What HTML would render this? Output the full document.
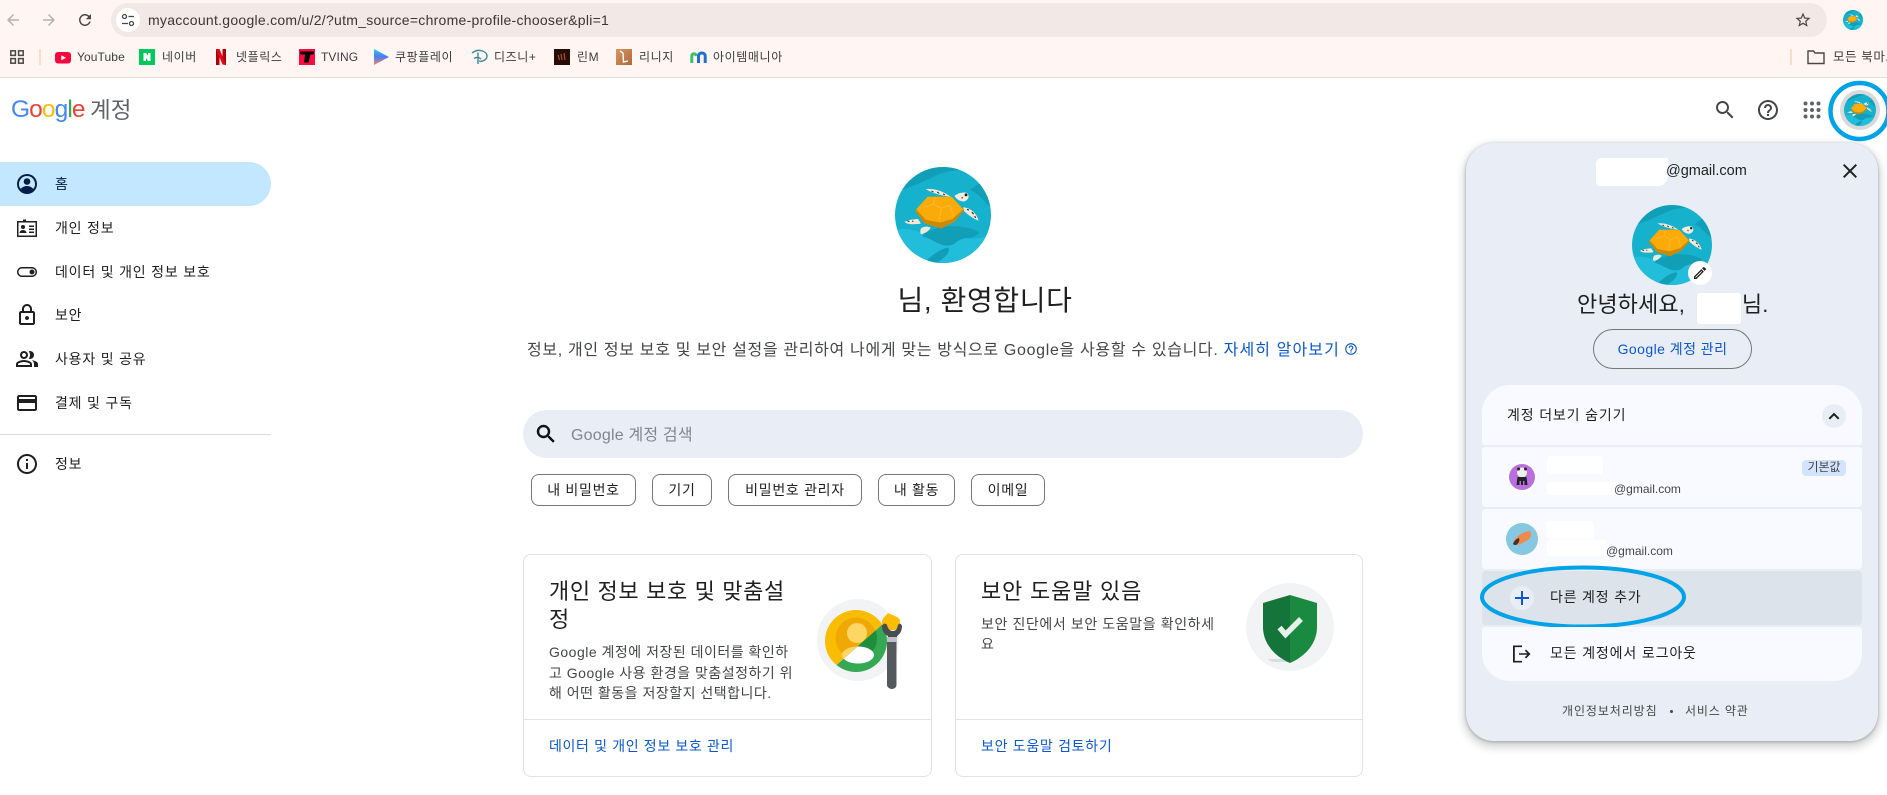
<!DOCTYPE html>
<html lang="ko"><head><meta charset="utf-8"><title>Google 계정</title>
<style>
html,body{margin:0;padding:0;background:#fff}
body{width:1887px;height:795px;position:relative;overflow:hidden;font-family:"Liberation Sans","Noto Sans CJK KR",sans-serif;color:#1f1f1f}
.a{position:absolute}
.t{position:absolute;white-space:nowrap}
.bm{font-size:12px;line-height:16px;top:49px;color:#3c3c3c;letter-spacing:.6px}
.nav{font-size:14px;line-height:20px;left:55px;color:#1f1f1f;letter-spacing:.8px}
.chip{position:absolute;top:474px;height:30px;border:1px solid #747775;border-radius:8px;background:#fff;font-size:14px;line-height:30px;text-align:center;color:#1f1f1f;letter-spacing:.7px}
.card{position:absolute;top:554px;height:221px;border:1px solid #e1e3e6;border-radius:8px;background:#fff}
.sec{position:absolute;left:1482px;width:380px;background:#f8faff;border-radius:4px}
svg{position:absolute;display:block}
</style></head><body>
<svg width="0" height="0" style="position:absolute"><defs>
<clipPath id="cc"><circle cx="50" cy="50" r="50"/></clipPath>
<clipPath id="cy"><path d="M0 0H110V5.600L0 103z"/></clipPath>
<clipPath id="cg"><path d="M110 5.600V110H0V103z"/></clipPath>
<symbol id="turtle" viewBox="0 0 100 100">
<g clip-path="url(#cc)">
<rect width="100" height="100" fill="#15b1cd"/>
<path d="M0 26C15 22 30 15 45 8 60 2 72 4 84 0H0z" fill="#119fb8"/>
<path d="M100 42C92 36 88 28 78 24L92 14 100 25z" fill="#119fb8"/>
<path d="M0 66C20 60 32 75 48 70 62 66 72 82 100 70V100H0z" fill="#21bddb"/>
<path d="M28 72C40 60 70 58 88 68 80 78 72 70 62 80 50 86 42 76 28 72z" fill="#119fb8"/>
<path d="M30 100C40 90 50 84 56 84 58 90 48 98 42 100z" fill="#119fb8"/>
<path d="M70 100C78 92 88 86 100 84V100z" fill="#119fb8"/>
</g>
<path d="M32 23C40 22 50 25 58 31 50 30 40 28 32 23z" fill="#efe9dc"/>
<path d="M38 25l2 1M44 26l2 1.500M50 28l2 1" stroke="#4a3a30" stroke-width="1.200"/>
<path d="M62 30C66 27 71 26 75 27 78 30 77 34 72 36 68 36 64 34 62 30z" fill="#f1ece0"/>
<circle cx="74" cy="29" r="1.500" fill="#222"/><circle cx="70" cy="32" r=".9" fill="#6b5a4a"/>
<path d="M71 42C77 42 85 47 87 56 82 54 76 50 72 46z" fill="#efe9dc"/>
<path d="M75 44l2 1M80 47l2 2M83 51l1 2" stroke="#3a2e28" stroke-width="1.200"/>
<path d="M24 54 16 55 10 57C12 60 20 60 27 59z" fill="#efe9dc"/>
<path d="M13 56l2 1M18 56l1 1" stroke="#3a2e28" stroke-width="1.100"/>
<path d="M33 62 28 63C26 65 26 68 27 70 32 69 36 66 37 63z" fill="#efe9dc"/>
<path d="M21 46 34 31 59 31 72 45 62 57 48 64 31 59z" fill="#c98a07"/>
<path d="M22 44 34 31 59 31 71 44 60 54 47 58 32 55z" fill="#fbab07"/>
<path d="M30 42l10-3 8 4 9-3M40 39l2-7M48 43l-2 12M57 40l4 12" stroke="#f7bf3f" stroke-width=".8" fill="none"/>
</symbol>
</defs></svg>

<!-- chrome -->
<div class="a" style="left:0;top:0;width:1887px;height:77px;background:#fff6f3;border-bottom:1px solid #f0ded8"></div>
<div class="a" style="left:111px;top:3px;width:1716px;height:34px;background:#f2e8e5;border-radius:17px"></div>
<svg style="left:4px;top:11px" width="18" height="18" viewBox="0 0 24 24"><path d="M20 11H7.800l5.600-5.600L12 4l-8 8 8 8 1.400-1.400L7.800 13H20z" fill="#b8b1ae"/></svg>
<svg style="left:40px;top:11px" width="18" height="18" viewBox="0 0 24 24"><path d="M4 11h12.200l-5.600-5.600L12 4l8 8-8 8-1.400-1.400 5.600-5.600H4z" fill="#b8b1ae"/></svg>
<svg style="left:76px;top:11px" width="18" height="18" viewBox="0 0 24 24"><path d="M17.650 6.350A7.960 7.960 0 0 0 12 4a8 8 0 1 0 7.730 10h-2.080A6 6 0 1 1 12 6c1.660 0 3.140.69 4.220 1.780L13 11h7V4z" fill="#4c4644"/></svg>
<div class="a" style="left:116px;top:8px;width:24px;height:24px;background:#fff;border-radius:50%"></div>
<svg style="left:120px;top:12px" width="16" height="16" viewBox="0 0 16 16" fill="none" stroke="#4c4644" stroke-width="1.300"><circle cx="4.500" cy="4.500" r="2"/><path d="M8.500 4.500H14M2 11.500h6"/><circle cx="11.500" cy="11.500" r="2"/></svg>
<div class="t" style="left:148px;top:10px;font-size:14px;line-height:20px;color:#3c3634;letter-spacing:.27px">myaccount.google.com/u/2/?utm_source=chrome-profile-chooser&amp;pli=1</div>
<svg style="left:1794px;top:11px" width="18" height="18" viewBox="0 0 24 24"><path d="M22 9.240l-7.190-.62L12 2 9.190 8.630 2 9.240l5.460 4.730L5.820 21 12 17.270 18.180 21l-1.630-7.030L22 9.240zM12 15.400l-3.760 2.270 1-4.280-3.320-2.880 4.380-.38L12 6.100l1.710 4.040 4.380.38-3.320 2.880 1 4.280L12 15.400z" fill="#4c4644"/></svg>
<svg style="left:1843px;top:10px" width="20" height="20"><use href="#turtle"/></svg>

<!-- bookmarks -->
<svg style="left:10px;top:50px" width="14" height="14" viewBox="0 0 14 14" fill="none" stroke="#4c4644" stroke-width="1.500"><rect x=".8" y=".8" width="4.600" height="4.600"/><rect x="8.600" y=".8" width="4.600" height="4.600"/><rect x=".8" y="8.600" width="4.600" height="4.600"/><rect x="8.600" y="8.600" width="4.600" height="4.600"/></svg>
<div class="a" style="left:39px;top:49px;width:2px;height:16px;background:#fbdcca"></div>
<svg style="left:55px;top:52px" width="16" height="12" viewBox="0 0 16 12"><rect width="16" height="11.500" rx="3" fill="#f8073f"/><path d="M6.300 3.200 11 5.800 6.300 8.400z" fill="#fff"/></svg>
<div class="t bm" style="left:77px;letter-spacing:.1px">YouTube</div>
<svg style="left:139px;top:49px" width="16" height="16" viewBox="0 0 16 16"><rect width="16" height="16" fill="#03c75a"/><path d="M4.500 4h2.600l2 3V4h2.400v8H9l-2-3v3H4.500z" fill="#fff"/></svg>
<div class="t bm" style="left:162px">네이버</div>
<svg style="left:216px;top:49px" width="10" height="16" viewBox="0 0 10 16"><path d="M0 0h3.500v16L0 16z" fill="#a8050d"/><path d="M6.500 0H10v16l-3.500-.6z" fill="#a8050d"/><path d="M0 0h3.500l6.500 16-3.500-.5z" fill="#e50914"/></svg>
<div class="t bm" style="left:236px">넷플릭스</div>
<svg style="left:299px;top:49px" width="16" height="16" viewBox="0 0 16 16"><rect width="16" height="16" fill="#fe0b41"/><path d="M1 2.500h14l-.5 3h-3L9.500 13.500H5L6 5.500H1.500z" fill="#0a0507"/></svg>
<div class="t bm" style="left:321px;letter-spacing:.1px">TVING</div>
<svg style="left:373px;top:48px" width="16" height="18" viewBox="0 0 16 18"><defs><linearGradient id="pl" x1="0" y1="0" x2="0" y2="1"><stop offset="0" stop-color="#28c6f0"/><stop offset=".5" stop-color="#4b7cf3"/><stop offset="1" stop-color="#f58a5a"/></linearGradient></defs><path d="M1 1 16 9 1 17z" fill="url(#pl)"/></svg>
<div class="t bm" style="left:395px">쿠팡플레이</div>
<svg style="left:471px;top:49px" width="17" height="16" viewBox="0 0 17 16" fill="none" stroke="#3a8a96" stroke-width="1.400"><path d="M1 4C7-1 16 2 16 7c0 4-5 6-8 5"/><path d="M7 3.500V15"/><path d="M3 9.500c2-1.500 5-1.500 7 .5"/></svg>
<div class="t bm" style="left:494px">디즈니+</div>
<svg style="left:554px;top:49px" width="16" height="16" viewBox="0 0 16 16"><rect width="16" height="16" fill="#260d05"/><path d="M4 6 5.500 11M7 5l1 6M10 4l1 7" stroke="#b3502c" stroke-width="1.200"/></svg>
<div class="t bm" style="left:577px">린M</div>
<svg style="left:616px;top:49px" width="16" height="16" viewBox="0 0 16 16"><defs><linearGradient id="rd" x1="0" y1="0" x2="1" y2="1"><stop offset="0" stop-color="#d9955f"/><stop offset="1" stop-color="#a96a3d"/></linearGradient></defs><rect width="16" height="16" fill="url(#rd)"/><path d="M4 2 7 4 7.500 13 12 12" fill="none" stroke="#fff" stroke-width="1.400"/></svg>
<div class="t bm" style="left:639px">리니지</div>
<svg style="left:690px;top:50px" width="17" height="14" viewBox="0 0 17 14" fill="none" stroke-width="3"><path d="M1.800 13V6c0-3 4-3 4.500 0" stroke="#3fbf6b"/><path d="M8.500 13V6c0-4 6.700-4 6.700 0v7" stroke="#1f6fd0"/></svg>
<div class="t bm" style="left:713px">아이템매니아</div>
<div class="a" style="left:1790px;top:49px;width:2px;height:16px;background:#fbdcca"></div>
<svg style="left:1807px;top:49px" width="18" height="16" viewBox="0 0 18 16" fill="none" stroke="#4c4644" stroke-width="1.400"><path d="M1 2h5.500l1.500 2h9v10.500H1z"/></svg>
<div class="t bm" style="left:1833px;font-size:12.500px">모든 북마크</div>

<!-- page header -->
<div class="t" style="left:11px;top:94px;font-size:24.500px;line-height:32px;letter-spacing:-.9px"><span style="color:#4285f4">G</span><span style="color:#ea4335">o</span><span style="color:#fbbc05">o</span><span style="color:#4285f4">g</span><span style="color:#34a853">l</span><span style="color:#ea4335">e</span></div>
<div class="t" style="left:90px;top:95px;font-size:22.500px;line-height:32px;color:#5f6368">계정</div>
<svg style="left:1713px;top:98px" width="24" height="24" viewBox="0 0 24 24"><path d="M15.500 14h-.79l-.28-.27C15.410 12.590 16 11.110 16 9.500 16 5.910 13.090 3 9.500 3S3 5.910 3 9.500 5.910 16 9.500 16c1.610 0 3.090-.59 4.230-1.570l.27.28v.79l5 4.990L20.490 19l-4.990-5zm-6 0C7.010 14 5 11.990 5 9.500S7.010 5 9.500 5 14 7.010 14 9.500 11.990 14 9.500 14z" fill="#444746"/></svg>
<svg style="left:1756px;top:98px" width="24" height="24" viewBox="0 0 24 24"><path d="M11 18h2v-2h-2v2zm1-16C6.480 2 2 6.480 2 12s4.480 10 10 10 10-4.480 10-10S17.520 2 12 2zm0 18c-4.410 0-8-3.590-8-8s3.590-8 8-8 8 3.590 8 8-3.590 8-8 8zm0-14c-2.210 0-4 1.790-4 4h2c0-1.100.9-2 2-2s2 .9 2 2c0 2-3 1.750-3 5h2c0-2.250 3-2.500 3-5 0-2.210-1.790-4-4-4z" fill="#444746"/></svg>
<svg style="left:1800px;top:98px" width="24" height="24" viewBox="0 0 24 24" fill="#5f6368"><circle cx="5.500" cy="5.500" r="2"/><circle cx="12" cy="5.500" r="2"/><circle cx="18.500" cy="5.500" r="2"/><circle cx="5.500" cy="12" r="2"/><circle cx="12" cy="12" r="2"/><circle cx="18.500" cy="12" r="2"/><circle cx="5.500" cy="18.500" r="2"/><circle cx="12" cy="18.500" r="2"/><circle cx="18.500" cy="18.500" r="2"/></svg>
<div class="a" style="left:1840px;top:90px;width:40px;height:40px;background:#d9d9d9;border-radius:50%"></div>
<svg style="left:1844px;top:94px" width="32" height="32"><use href="#turtle"/></svg>
<svg style="left:1825px;top:78px" width="62" height="66"><ellipse cx="34.500" cy="33" rx="29" ry="28" fill="none" stroke="#00a2e8" stroke-width="4.500"/></svg>

<!-- sidebar -->
<div class="a" style="left:0;top:162px;width:271px;height:44px;background:#c2e7ff;border-radius:0 22px 22px 0"></div>
<svg style="left:15px;top:172px" width="24" height="24" viewBox="0 0 24 24"><path d="M12 2a10 10 0 1 0 0 20 10 10 0 0 0 0-20zm0 2a8 8 0 0 1 6.300 12.900C16.600 15 14.400 14 12 14s-4.600 1-6.300 2.900A8 8 0 0 1 12 4z" fill="#041e49"/><circle cx="12" cy="9.500" r="3.300" fill="#041e49"/></svg>
<div class="t nav" style="top:174px;color:#041e49">홈</div>
<svg style="left:15px;top:216px" width="24" height="24" viewBox="0 0 24 24" fill="#1f1f1f"><path d="M2 5h6V3.500h3V5h11v16H2V5zm1.500 1.500v13h17v-13z"/><circle cx="8" cy="11" r="2"/><path d="M4.500 17c0-2 2-3 3.500-3s3.500 1 3.500 3z"/><path d="M14 9.500h5V11h-5zM14 12.500h5V14h-5zM14 15.500h5V17h-5z"/></svg>
<div class="t nav" style="top:218px">개인 정보</div>
<svg style="left:15px;top:260px" width="24" height="24" viewBox="0 0 24 24"><path d="M17 7H7c-2.760 0-5 2.240-5 5s2.240 5 5 5h10c2.760 0 5-2.240 5-5s-2.240-5-5-5zm0 8.500H7c-1.930 0-3.500-1.570-3.500-3.500S5.070 8.500 7 8.500h10c1.930 0 3.500 1.570 3.500 3.500s-1.570 3.500-3.500 3.500zm0-6a2.500 2.500 0 1 0 0 5 2.500 2.500 0 0 0 0-5z" fill="#1f1f1f"/></svg>
<div class="t nav" style="top:262px">데이터 및 개인 정보 보호</div>
<svg style="left:15px;top:303px" width="24" height="24" viewBox="0 0 24 24"><path d="M18 8h-1V6c0-2.760-2.240-5-5-5S7 3.240 7 6v2H6c-1.100 0-2 .9-2 2v10c0 1.100.9 2 2 2h12c1.100 0 2-.9 2-2V10c0-1.100-.9-2-2-2zM9 6c0-1.660 1.340-3 3-3s3 1.340 3 3v2H9V6zm9 14H6V10h12v10zm-6-3c1.100 0 2-.9 2-2s-.9-2-2-2-2 .9-2 2 .9 2 2 2z" fill="#1f1f1f"/></svg>
<div class="t nav" style="top:305px">보안</div>
<svg style="left:15px;top:347px" width="24" height="24" viewBox="0 0 24 24"><path d="M16.670 13.130C18.040 14.060 19 15.320 19 17v3h4v-3c0-2.180-3.570-3.470-6.330-3.870zM15 12c2.210 0 4-1.790 4-4s-1.790-4-4-4c-.47 0-.91.1-1.330.24C14.500 5.270 15 6.580 15 8s-.5 2.730-1.330 3.760c.42.14.86.24 1.330.24zM9 12c2.210 0 4-1.790 4-4s-1.790-4-4-4-4 1.790-4 4 1.790 4 4 4zm0-6c1.100 0 2 .9 2 2s-.9 2-2 2-2-.9-2-2 .9-2 2-2zM9 13c-2.670 0-8 1.340-8 4v3h16v-3c0-2.660-5.330-4-8-4zm6 5H3v-.99C3.200 16.290 6.300 15 9 15s5.800 1.290 6 2z" fill="#1f1f1f"/></svg>
<div class="t nav" style="top:349px">사용자 및 공유</div>
<svg style="left:15px;top:391px" width="24" height="24" viewBox="0 0 24 24"><path d="M20 4H4c-1.110 0-1.990.89-1.990 2L2 18c0 1.110.89 2 2 2h16c1.110 0 2-.89 2-2V6c0-1.110-.89-2-2-2zm0 14H4v-6h16v6zm0-10H4V6h16v2z" fill="#1f1f1f"/></svg>
<div class="t nav" style="top:393px">결제 및 구독</div>
<div class="a" style="left:0;top:434px;width:271px;height:1px;background:#dadce0"></div>
<svg style="left:15px;top:452px" width="24" height="24" viewBox="0 0 24 24"><path d="M11 7h2v2h-2zm0 4h2v6h-2zm1-9C6.480 2 2 6.480 2 12s4.480 10 10 10 10-4.480 10-10S17.520 2 12 2zm0 18c-4.410 0-8-3.590-8-8s3.590-8 8-8 8 3.590 8 8-3.590 8-8 8z" fill="#1f1f1f"/></svg>
<div class="t nav" style="top:454px">정보</div>

<!-- main -->
<svg style="left:895px;top:167px" width="96" height="96"><use href="#turtle"/></svg>
<div class="t" style="left:881px;top:279px;width:208px;text-align:center;font-size:28px;line-height:44px;color:#1f1f1f;letter-spacing:.6px">님, 환영합니다</div>
<div class="t" style="left:527px;top:339px;font-size:16px;line-height:24px;color:#444746;letter-spacing:.67px">정보, 개인 정보 보호 및 보안 설정을 관리하여 나에게 맞는 방식으로 Google을 사용할 수 있습니다. <span style="color:#0b57d0;letter-spacing:1.1px">자세히 알아보기</span></div>
<svg style="left:1344px;top:342px" width="14" height="14" viewBox="0 0 24 24"><path d="M11 18h2v-2h-2v2zm1-16C6.480 2 2 6.480 2 12s4.480 10 10 10 10-4.480 10-10S17.520 2 12 2zm0 18c-4.410 0-8-3.590-8-8s3.590-8 8-8 8 3.590 8 8-3.590 8-8 8zm0-14c-2.210 0-4 1.790-4 4h2c0-1.100.9-2 2-2s2 .9 2 2c0 2-3 1.750-3 5h2c0-2.250 3-2.500 3-5 0-2.210-1.790-4-4-4z" fill="#0b57d0"/></svg>

<div class="a" style="left:523px;top:410px;width:840px;height:48px;background:#e9eef6;border-radius:24px"></div>
<svg style="left:534px;top:422px" width="24" height="24" viewBox="0 0 24 24"><path d="M15.500 14h-.79l-.28-.27C15.410 12.590 16 11.110 16 9.500 16 5.910 13.090 3 9.500 3S3 5.910 3 9.500 5.910 16 9.500 16c1.610 0 3.090-.59 4.230-1.570l.27.28v.79l5 4.990L20.490 19l-4.990-5zm-6 0C7.010 14 5 11.990 5 9.500S7.010 5 9.500 5 14 7.010 14 9.500 11.990 14 9.500 14z" fill="#111" stroke="#111" stroke-width=".5"/></svg>
<div class="t" style="left:571px;top:424px;font-size:16px;line-height:24px;color:#80868b;letter-spacing:.2px">Google 계정 검색</div>

<div class="chip" style="left:531px;width:103px">내 비밀번호</div>
<div class="chip" style="left:652px;width:58px">기기</div>
<div class="chip" style="left:728px;width:132px">비밀번호 관리자</div>
<div class="chip" style="left:878px;width:75px">내 활동</div>
<div class="chip" style="left:971px;width:72px">이메일</div>

<!-- cards -->
<div class="card" style="left:523px;width:407px"></div>
<div class="a" style="left:524px;top:719px;width:407px;height:1px;background:#e1e3e6"></div>
<div class="t" style="left:549px;top:578px;width:255px;white-space:normal;font-size:22px;line-height:28px;letter-spacing:.65px">개인 정보 보호 및 맞춤설<br>정</div>
<div class="t" style="left:549px;top:642px;font-size:14px;line-height:20.500px;color:#444746;letter-spacing:.5px">Google 계정에 저장된 데이터를 확인하<br>고 Google 사용 환경을 맞춤설정하기 위<br>해 어떤 활동을 저장할지 선택합니다.</div>
<div class="t" style="left:549px;top:736px;font-size:14px;line-height:20px;color:#0b57d0;letter-spacing:.65px">데이터 및 개인 정보 보호 관리</div>
<svg style="left:805px;top:590px" width="110" height="105" viewBox="0 0 110 105">
<circle cx="53" cy="50" r="41" fill="#f1f3f4"/>
<g clip-path="url(#cy)"><circle cx="51" cy="51" r="31" fill="#fbbc04"/><circle cx="51" cy="48" r="20.500" fill="#f0a804"/><circle cx="52" cy="43" r="10" fill="#fdd663"/><ellipse cx="53" cy="65" rx="16" ry="8.500" fill="#fdd663"/></g>
<g clip-path="url(#cg)"><circle cx="51" cy="51" r="31" fill="#34a853"/><path d="M31 48a20.500 20.500 0 0 1 41 0c0 9-5 16-12 19H42c-7-3-11-10-11-19z" fill="#1e8e3e"/><circle cx="52" cy="43" r="10" fill="#fff"/><ellipse cx="53" cy="65" rx="16" ry="8.500" fill="#fff"/></g>
<path d="M83 23c-2 3-6 5-6 9 0 4 3 7 7 8h6c3-2 5-5 5-9 0-4-6-5-12-8z" fill="#fbbc04"/>
<path d="M77 36c0 5 2 8 6 10v5h9v-5c3-2 5-5 5-10-1-3-3-3-4-1-1 4-2 6-5 6s-5-2-6-6c-1-2-4-2-5 1z" fill="#494c50"/>
<rect x="82" y="47" width="10" height="5" fill="#bdc1c6"/>
<path d="M82 52h9.500v43c0 2-2 4-4.500 4s-5-2-5-4z" fill="#55585d"/>
</svg>

<div class="card" style="left:955px;width:406px"></div>
<div class="a" style="left:956px;top:719px;width:406px;height:1px;background:#e1e3e6"></div>
<div class="t" style="left:981px;top:578px;font-size:22px;line-height:28px;letter-spacing:.8px">보안 도움말 있음</div>
<div class="t" style="left:981px;top:614px;font-size:14px;line-height:20px;color:#444746;letter-spacing:.6px">보안 진단에서 보안 도움말을 확인하세<br>요</div>
<div class="t" style="left:981px;top:736px;font-size:14px;line-height:20px;color:#0b57d0;letter-spacing:.7px">보안 도움말 검토하기</div>
<svg style="left:1240px;top:575px" width="105" height="105" viewBox="0 0 105 105">
<circle cx="50" cy="52" r="44" fill="#f1f3f4"/>
<path d="M28 84h22v3H36c-4 0-7-1-8-3z" fill="#dadce0"/>
<path d="M50 20 23 28V52c0 16 11 29 27 36z" fill="#15743a"/>
<path d="M50 20 77 28V52c0 16-11 29-27 36z" fill="#1a8a40"/>
<polyline points="39.500,52.500 45.500,59.500 61,44" fill="none" stroke="#e8f0ea" stroke-width="5.500"/>
</svg>

<!-- account panel -->
<div class="a" style="left:1466px;top:143px;width:412px;height:598px;background:#e9eef6;border-radius:28px;box-shadow:0 4px 8px 3px rgba(60,64,67,.2),0 1px 3px rgba(60,64,67,.35)"></div>
<div class="a" style="left:1596px;top:158px;width:72px;height:28px;background:#fff;border-radius:6px 2px 10px 4px"></div>
<div class="t" style="left:1666px;top:161px;font-size:14.500px;line-height:20px;color:#1f1f1f">@gmail.com</div>
<svg style="left:1838px;top:159px" width="24" height="24" viewBox="0 0 24 24"><path d="M19 6.410 17.590 5 12 10.590 6.410 5 5 6.410 10.590 12 5 17.590 6.410 19 12 13.410 17.590 19 19 17.590 13.410 12z" fill="#1f1f1f"/></svg>
<svg style="left:1632px;top:205px" width="80" height="80"><use href="#turtle"/></svg>
<div class="a" style="left:1688px;top:261px;width:24px;height:24px;background:#fff;border-radius:50%"></div>
<svg style="left:1692px;top:265px" width="16" height="16" viewBox="0 0 24 24"><path d="M3 17.250V21h3.750L17.810 9.940l-3.750-3.750zM5.920 19H5v-.92l9.060-9.060.92.92zM20.710 7.040a1 1 0 0 0 0-1.410l-2.340-2.340a1 1 0 0 0-1.410 0l-1.830 1.830 3.750 3.750z" fill="#1f1f1f"/></svg>
<div class="t" style="left:1577px;top:288px;font-size:22px;line-height:34px;color:#1f1f1f;letter-spacing:.1px">안녕하세요,<span style="display:inline-block;width:57px"></span>님.</div>
<div class="a" style="left:1697px;top:293px;width:44px;height:31px;background:#fff;border-radius:3px"></div>
<div class="a" style="left:1593px;top:329px;width:157px;height:38px;border:1px solid #747775;border-radius:20px;font-size:14px;line-height:38px;text-align:center;color:#0b57d0;letter-spacing:.45px">Google 계정 관리</div>

<div class="sec" style="top:385px;height:60px;border-radius:28px 28px 4px 4px"></div>
<div class="t" style="left:1507px;top:405px;font-size:14px;line-height:20px;color:#1f1f1f;letter-spacing:.85px">계정 더보기 숨기기</div>
<div class="a" style="left:1822px;top:404px;width:24px;height:24px;background:#e9eef6;border-radius:50%"></div>
<svg style="left:1824px;top:406px" width="20" height="20" viewBox="0 0 24 24"><path d="M12 8l-6.500 6.500 1.700 1.700L12 11.400l4.800 4.800 1.700-1.700z" fill="#1f1f1f"/></svg>

<div class="sec" style="top:447px;height:60px"></div>
<div class="a" style="left:1507px;top:462px;width:30px;height:30px;background:#fff;border-radius:50%"></div>
<svg style="left:1509px;top:464px" width="26" height="26" viewBox="0 0 26 26"><circle cx="13" cy="13" r="13" fill="#b96fdd"/><circle cx="13" cy="8.500" r="5" fill="#eee"/><circle cx="9.500" cy="5" r="1.500" fill="#222"/><circle cx="16.500" cy="5" r="1.500" fill="#222"/><path d="M8.500 13h9l1 8h-3v-4h-1.500v4h-2V17H10.500v4h-3z" fill="#222"/></svg>
<div class="a" style="left:1547px;top:456px;width:56px;height:18px;background:#fff;border-radius:4px"></div>
<div class="a" style="left:1547px;top:482px;width:68px;height:13px;background:#fff;border-radius:3px"></div>
<div class="t" style="left:1614px;top:480px;font-size:12px;line-height:18px;color:#444746">@gmail.com</div>
<div class="a" style="left:1802px;top:460px;width:44px;height:16px;background:#d3e3fd;border-radius:4px;font-size:12px;line-height:15px;text-align:center;color:#444746">기본값</div>

<div class="sec" style="top:509px;height:60px"></div>
<svg style="left:1506px;top:523px" width="32" height="32" viewBox="0 0 32 32"><circle cx="16" cy="16" r="16" fill="#86c8e2"/><path d="M7 21c1-6 8-12 17-13 2 3 1 7-2 9-5 3-9 5-12 5z" fill="#f08a4b"/><path d="M7 21c1-3 3-5 6-6 1 2 0 5-3 7-1 0-2 0-3-1z" fill="#40332c"/></svg>
<div class="a" style="left:1546px;top:521px;width:48px;height:18px;background:#fff;border-radius:4px"></div>
<div class="a" style="left:1547px;top:540px;width:60px;height:16px;background:#fff;border-radius:3px"></div>
<div class="t" style="left:1606px;top:542px;font-size:12px;line-height:18px;color:#444746">@gmail.com</div>

<div class="sec" style="top:571px;height:54px;background:#dde3ea"></div>
<div class="a" style="left:1510px;top:586px;width:24px;height:24px;background:#e9eef6;border-radius:50%"></div>
<svg style="left:1510px;top:586px" width="24" height="24" viewBox="0 0 24 24"><path d="M19 13h-6v6h-2v-6H5v-2h6V5h2v6h6z" fill="#0b57d0"/></svg>
<div class="t" style="left:1550px;top:587px;font-size:14px;line-height:20px;color:#1f1f1f;letter-spacing:.8px">다른 계정 추가</div>
<svg style="left:1475px;top:562px" width="216" height="70"><ellipse cx="108" cy="35" rx="101" ry="29.500" fill="none" stroke="#00a2e8" stroke-width="4"/></svg>

<div class="sec" style="top:627px;height:54px;border-radius:4px 4px 28px 28px"></div>
<svg style="left:1510px;top:642px" width="24" height="24" viewBox="0 0 24 24"><path d="M3 3.500h9v1.600H4.800v13.800H12v1.600H3zM16 7.500l4.500 4.500-4.500 4.500-1.200-1.200 2.500-2.500H9v-1.600h8.300l-2.500-2.500z" fill="#1f1f1f"/></svg>
<div class="t" style="left:1550px;top:643px;font-size:14px;line-height:20px;color:#1f1f1f;letter-spacing:.85px">모든 계정에서 로그아웃</div>

<div class="t" style="left:1562px;top:702px;font-size:12px;line-height:18px;color:#444746;letter-spacing:.9px">개인정보처리방침</div>
<div class="a" style="left:1670px;top:710px;width:3px;height:3px;background:#444746;border-radius:50%"></div>
<div class="t" style="left:1685px;top:702px;font-size:12px;line-height:18px;color:#444746;letter-spacing:.85px">서비스 약관</div>
</body></html>
